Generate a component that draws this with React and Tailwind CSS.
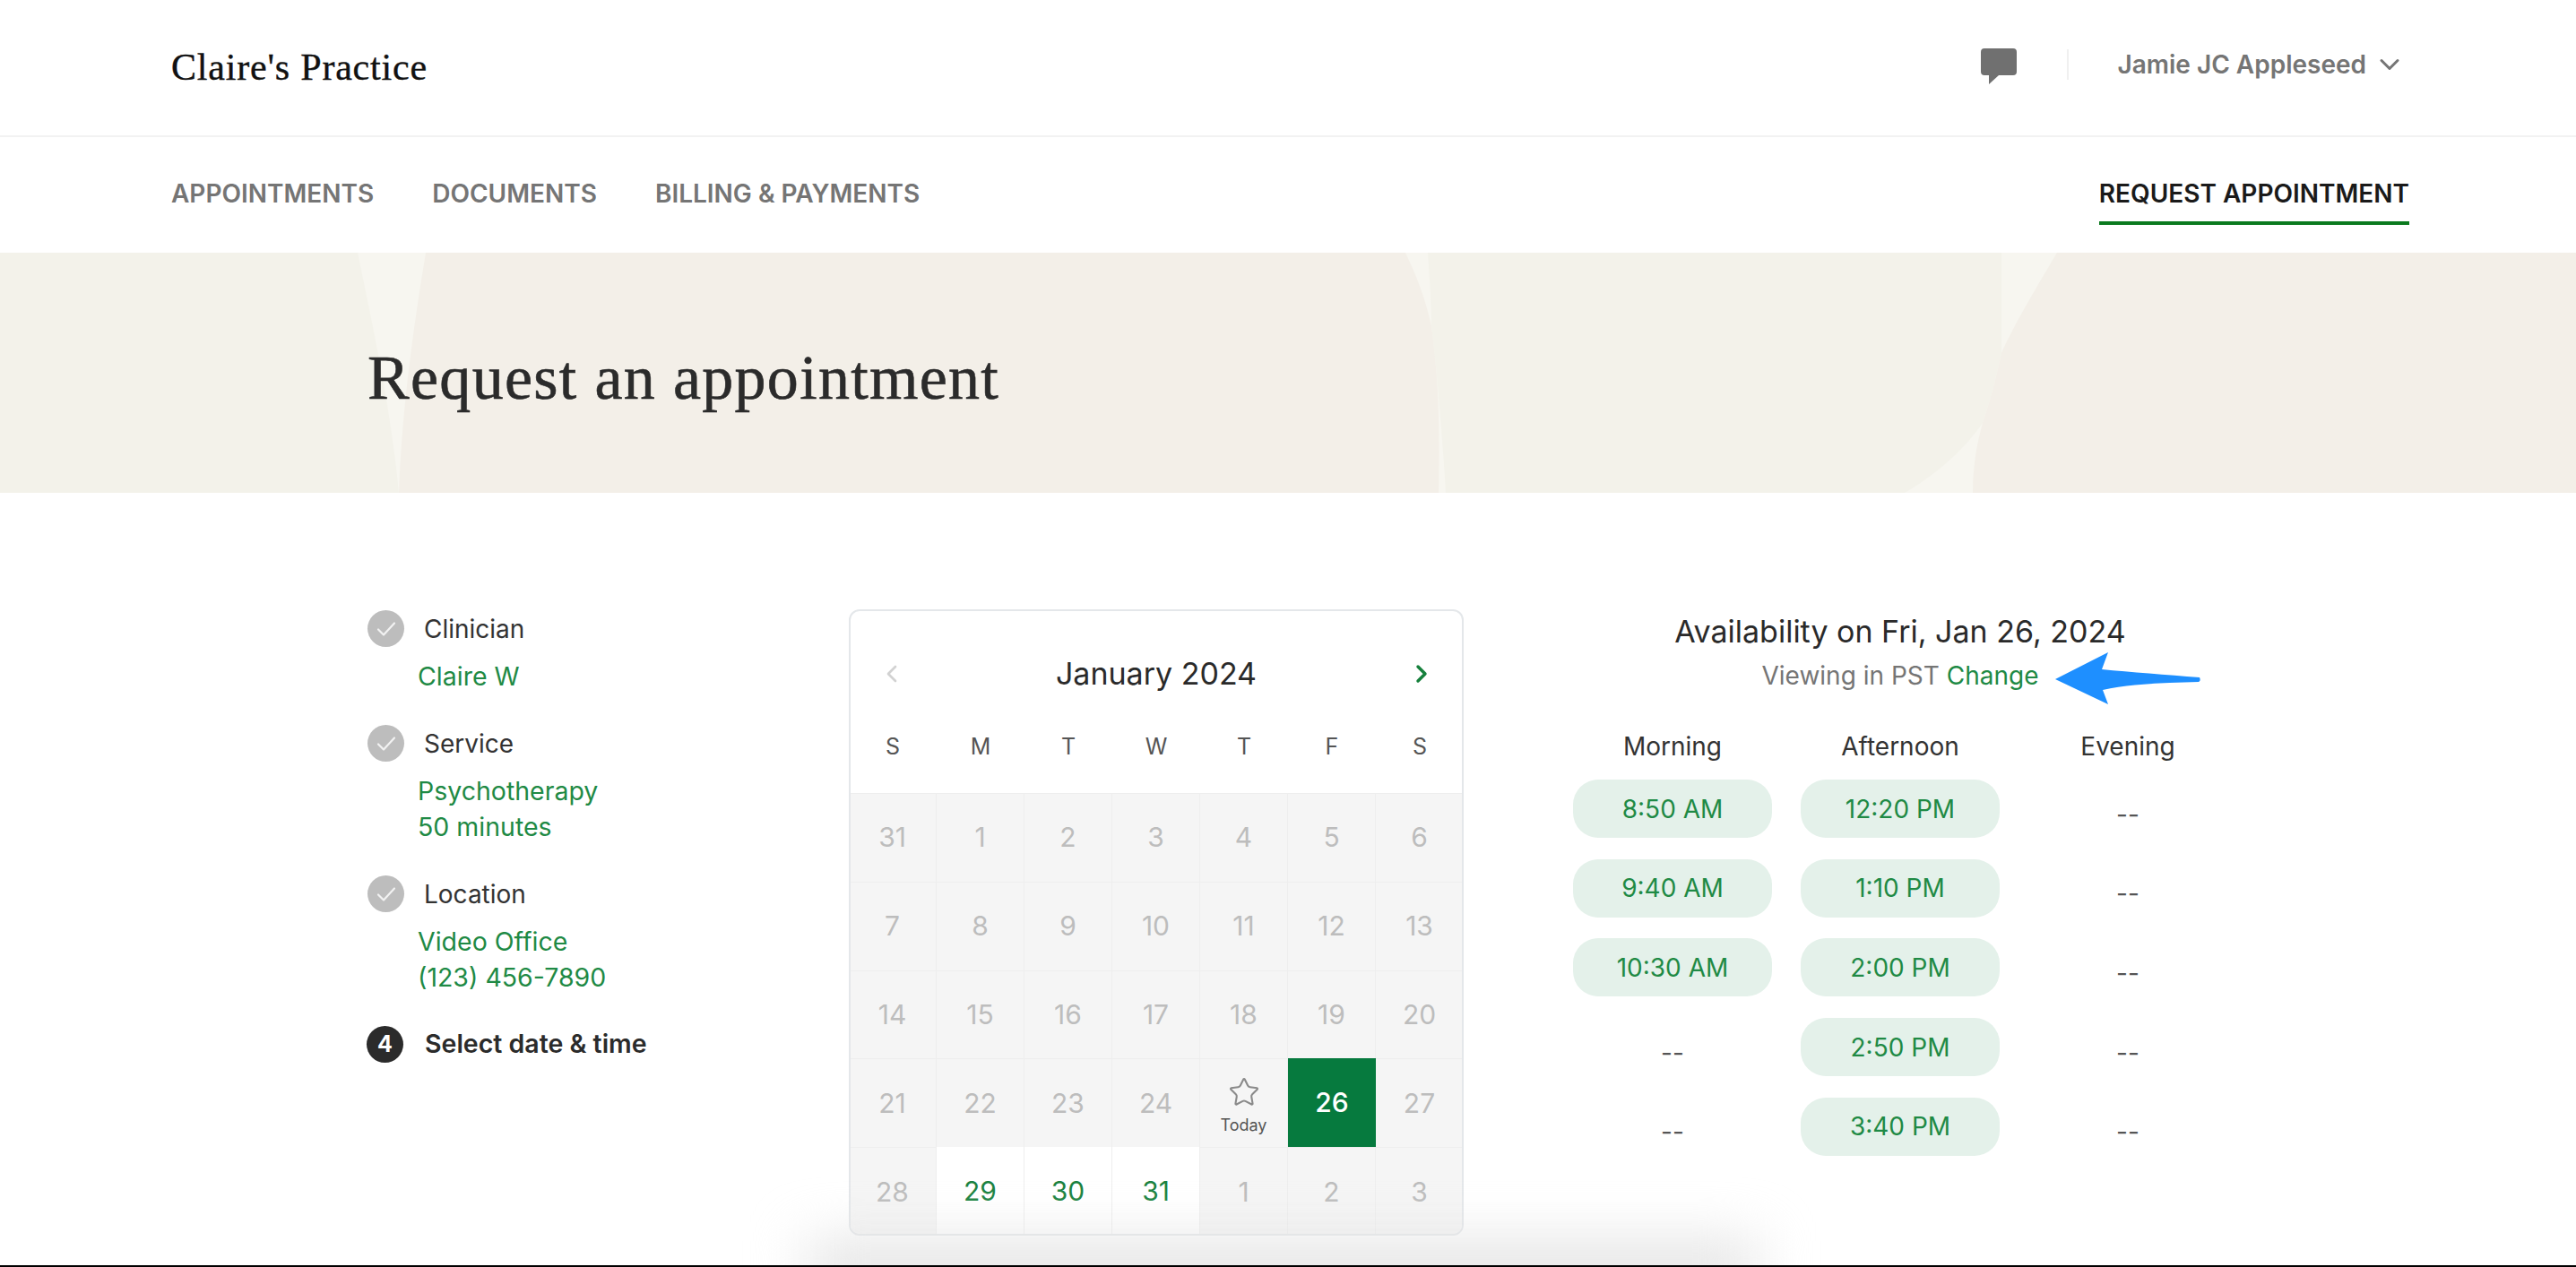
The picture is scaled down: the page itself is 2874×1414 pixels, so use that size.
import { ChevronDown, ChevronLeft, ChevronRight, Star } from 'lucide-react'

const weeks = [
  [31, 1, 2, 3, 4, 5, 6],
  [7, 8, 9, 10, 11, 12, 13],
  [14, 15, 16, 17, 18, 19, 20],
  [21, 22, 23, 24, 'today', 26, 27],
  [28, 29, 30, 31, 1, 2, 3],
]

const morning = ['8:50 AM', '9:40 AM', '10:30 AM', null, null]
const afternoon = ['12:20 PM', '1:10 PM', '2:00 PM', '2:50 PM', '3:40 PM']
const evening = [null, null, null, null, null]

function HeroShapes() {
  return (
    <svg className="absolute inset-0 h-full w-full" viewBox="0 0 2874 268" preserveAspectRatio="none" aria-hidden>
      <rect width="2874" height="268" fill="#f7f6f0" />
      <path d="M0 0H399C420 100 438 190 445 268H0Z" fill="#f3f2ea" />
      <path d="M475 0C460 90 448 180 445 268H1605C1607 190 1604 130 1597 82C1590 50 1580 25 1568 0Z" fill="#f3efe8" />
      <path d="M1593 0C1595 30 1597 60 1597 82C1603 130 1609 200 1613 268H2125C2165 245 2195 215 2212 190C2222 160 2228 135 2233 112V0Z" fill="#f3f2ea" />
      <path d="M2295 0C2268 45 2245 85 2233 112C2228 135 2222 160 2212 190C2205 215 2201 240 2201 268H2874V0Z" fill="#f3efe8" />
    </svg>
  )
}

function CheckCircle() {
  return (
    <span className="ml-px flex h-[41px] w-[41px] items-center justify-center rounded-full bg-[#bdbdbd]">
      <svg width="22" height="18" viewBox="0 0 22 18" fill="none" aria-hidden>
        <path d="M2 9.5 8 15.5 20 2.5" stroke="#f2f2f2" strokeWidth="2.2" strokeLinecap="round" strokeLinejoin="round" />
      </svg>
    </span>
  )
}

function Step({ label, lines }) {
  return (
    <div className="mb-[34px]">
      <div className="flex h-[41px] items-center gap-[22px]">
        <CheckCircle />
        <span className="text-[28px] text-[#333]">{label}</span>
      </div>
      <div className="mt-[13px] ml-[57px] text-[28.5px] leading-[40px] text-[#1f8a45]">
        {lines.map((l) => (
          <div key={l}>{l}</div>
        ))}
      </div>
    </div>
  )
}

function Calendar() {
  return (
    <div className="h-[699px] w-[686px] shrink-0 overflow-hidden rounded-[12px] border-2 border-[#e4e7ea] bg-white">
      <div className="-ml-[2px] grid h-[203px] w-[686px] grid-cols-7 grid-rows-[136px_67px] text-center">
        <div className="flex items-center justify-center pt-[3px] pr-[2px]">
          <ChevronLeft className="h-[32px] w-[32px] text-[#d2d2d2]" strokeWidth={2} />
        </div>
        <div className="col-span-5 flex items-center justify-center pt-[3px] text-[34px] text-[#2a2a2a]">January 2024</div>
        <div className="flex items-center justify-center pt-[3px] pl-[4px]">
          <ChevronRight className="h-[32px] w-[32px] text-[#16803c]" strokeWidth={2.6} />
        </div>
        {['S', 'M', 'T', 'W', 'T', 'F', 'S'].map((d, i) => (
          <div key={i} className="text-[25px] leading-[30px] text-[#555]">{d}</div>
        ))}
      </div>
      <div className="-ml-[2px] grid w-[686px] auto-rows-[98.8px] grid-cols-7">
        {weeks.map((week, w) =>
          week.map((day, d) => {
            if (day === 'today') {
              return (
                <div key={d + '-' + w} className="flex flex-col items-center justify-center border-t border-r border-[#eeeeee] bg-[#f5f5f5] pt-[5px]">
                  <Star className="h-[36px] w-[36px] text-[#8a8a8a]" strokeWidth={1.4} />
                  <span className="mt-[9px] text-[18px] leading-[20px] text-[#555]">Today</span>
                </div>
              )
            }
            if (w === 3 && d === 5) {
              return (
                <div key={d + '-' + w} className="flex items-center justify-center bg-[#067a3e] text-[30px] font-medium text-white">{day}</div>
              )
            }
            const open = w === 4 && d >= 1 && d <= 3
            return (
              <div
                key={d + '-' + w}
                className={
                  open
                    ? 'flex items-center justify-center border-r border-[#eeeeee] bg-white text-[30px] text-[#1a8240]'
                    : 'flex items-center justify-center border-t border-r border-[#eeeeee] bg-[#f5f5f5] text-[30px] text-[#bdbdbd]'
                }
              >
                {day}
              </div>
            )
          }),
        )}
      </div>
    </div>
  )
}

function Slot({ time }) {
  if (!time) {
    return <div className="flex h-[65px] items-center justify-center pt-[12px] text-[28px] text-[#555]">--</div>
  }
  return (
    <div className="flex h-[65px] items-center justify-center rounded-[28px] bg-[#e4f1ea] text-[28px] text-[#1f8a45]">{time}</div>
  )
}

function Column({ title, slots }) {
  return (
    <div className="w-[222px]">
      <div className="mb-[19px] text-center text-[28px] leading-[36px] text-[#333]">{title}</div>
      <div className="flex flex-col gap-[23.7px]">
        {slots.map((s, i) => (
          <Slot key={i} time={s} />
        ))}
      </div>
    </div>
  )
}

export default function App() {
  return (
    <div className="relative flex h-[1414px] w-full flex-col overflow-hidden bg-white font-['Inter',sans-serif]">
      {/* ---------- Top bar ---------- */}
      <header className="flex h-[153px] items-center justify-between border-b-2 border-[#f2f2f2] pr-[190px] pl-[191px]">
        <div className="font-['Liberation_Serif',serif] text-[42px] tracking-[0.8px] text-[#111] [-webkit-text-stroke:0.4px_#111]">Claire's Practice</div>
        <div className="flex items-center pb-[8px]">
          <svg className="mt-[5px]" width="40" height="40" viewBox="0 0 40 40" aria-hidden>
            <path d="M4 0H36a4 4 0 0 1 4 4V26a4 4 0 0 1-4 4H20L9 40V30H4a4 4 0 0 1-4-4V4a4 4 0 0 1 4-4Z" fill="#707070" />
          </svg>
          <div className="mr-[54px] ml-[56px] h-[34px] w-[2px] bg-[#f0f0f0]" />
          <span className="text-[28px] font-semibold text-[#757575]">Jamie JC Appleseed</span>
          <ChevronDown className="ml-[8px] h-[36px] w-[36px] text-[#757575]" strokeWidth={2} />
        </div>
      </header>

      {/* ---------- Nav ---------- */}
      <nav className="flex h-[129px] items-center justify-between pr-[186px] pl-[191px]">
        <div className="flex gap-[65px] pb-[4px] text-[28px] font-semibold text-[#757575]">
          <span>APPOINTMENTS</span>
          <span>DOCUMENTS</span>
          <span>BILLING &amp; PAYMENTS</span>
        </div>
        <div className="mt-[10px] border-b-[4px] border-[#0b7a1e] pb-[10px] text-[28px] font-semibold text-[#1a1a1a]">REQUEST APPOINTMENT</div>
      </nav>

      {/* ---------- Hero ---------- */}
      <section className="relative flex h-[268px] items-center pl-[410px]">
        <HeroShapes />
        <h1 className="relative pt-[10px] font-['Liberation_Serif',serif] text-[70px] tracking-[1.3px] text-[#2b2b2b] [-webkit-text-stroke:0.6px_#2b2b2b]">Request an appointment</h1>
      </section>

      {/* ---------- Booking ---------- */}
      <main className="flex pt-[130px] pl-[409px]">
        <div className="w-[538px] shrink-0 pt-px">
          <Step label="Clinician" lines={['Claire W']} />
          <Step label="Service" lines={['Psychotherapy', '50 minutes']} />
          <Step label="Location" lines={['Video Office', '(123) 456-7890']} />
          <div className="flex h-[41px] items-center gap-[24px]">
            <span className="flex h-[41px] w-[41px] items-center justify-center rounded-full bg-[#2b2b2b] text-[25px] font-bold text-white">4</span>
            <span className="text-[28.5px] font-semibold text-[#2b2b2b]">Select date &amp; time</span>
          </div>
        </div>

        <Calendar />

        <div className="ml-[122px] w-[730px] shrink-0 pt-px">
          <div className="text-center text-[34px] leading-[48px] text-[#2a2a2a]">Availability on Fri, Jan 26, 2024</div>
          <div className="relative mt-px text-center text-[28px] leading-[48px] text-[#757575]">
            Viewing in PST <span className="text-[#1f8a45]">Change</span>
            <svg className="absolute top-[-4px] left-[537px]" width="164" height="62" viewBox="0 0 164 62" aria-hidden>
              <path d="M1 32 60 2 53 21C85 24 125 27 162 30 163 32 163 34 161 35 125 36 85 37 54 44L60 60Z" fill="#1e8fff" />
            </svg>
          </div>
          <div className="mt-[37px] flex gap-[32px]">
            <Column title="Morning" slots={morning} />
            <Column title="Afternoon" slots={afternoon} />
            <Column title="Evening" slots={evening} />
          </div>
        </div>
      </main>

      {/* bottom edge of the capture */}
      <div className="absolute bottom-[-30px] left-[900px] h-[60px] w-[1060px] bg-[#e4e4e4] blur-[30px]" />
      <div className="absolute right-0 bottom-0 left-0 h-[2px] bg-black" />
    </div>
  )
}
